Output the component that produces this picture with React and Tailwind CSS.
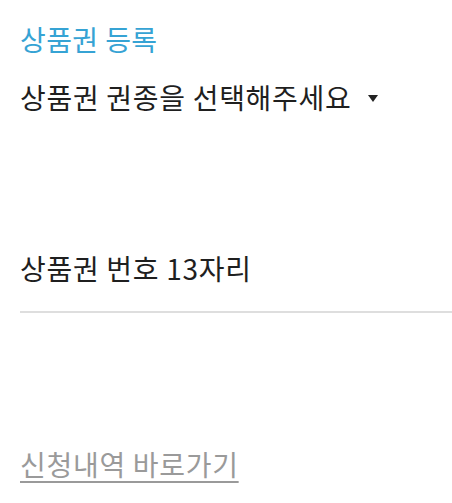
import React from 'react';

const font = { fontFamily: '"Noto Sans CJK KR", "Noto Sans", sans-serif' };

const GiftCardRegister = () => {
  return (
    <div className="min-h-[503px] bg-white pl-5 pt-[21px] tracking-[0.7px]" style={font}>
      <h1 className="text-[28px] leading-[36px] font-normal text-[#36a3d4] tracking-[0.4px]">상품권 등록</h1>

      {/* 권종 선택 드롭다운 */}
      <button className="mt-[22px] flex items-center text-[28px] leading-[36px] text-[#1f1f1f] tracking-[0.7px]">
        <span>상품권 권종을 선택해주세요</span>
        <svg className="ml-[17px] mt-[3px]" width="10" height="7" viewBox="0 0 10 7">
          <path d="M0 0H10L5 7Z" fill="#222" />
        </svg>
      </button>

      {/* 상품권 번호 입력 */}
      <div className="mt-[135px] text-[28px] leading-[36px] text-[#1f1f1f]">상품권 번호 13자리</div>
      <div className="mt-[25px] h-[2px] bg-[#dedede]" />

      <a href="#" className="mt-[133px] inline-block text-[28px] leading-[36px] text-[#9a9a9a] underline underline-offset-[5px] decoration-[2px]">
        신청내역 바로가기
      </a>
    </div>
  );
};

export default function App() {
  return <GiftCardRegister />;
}
